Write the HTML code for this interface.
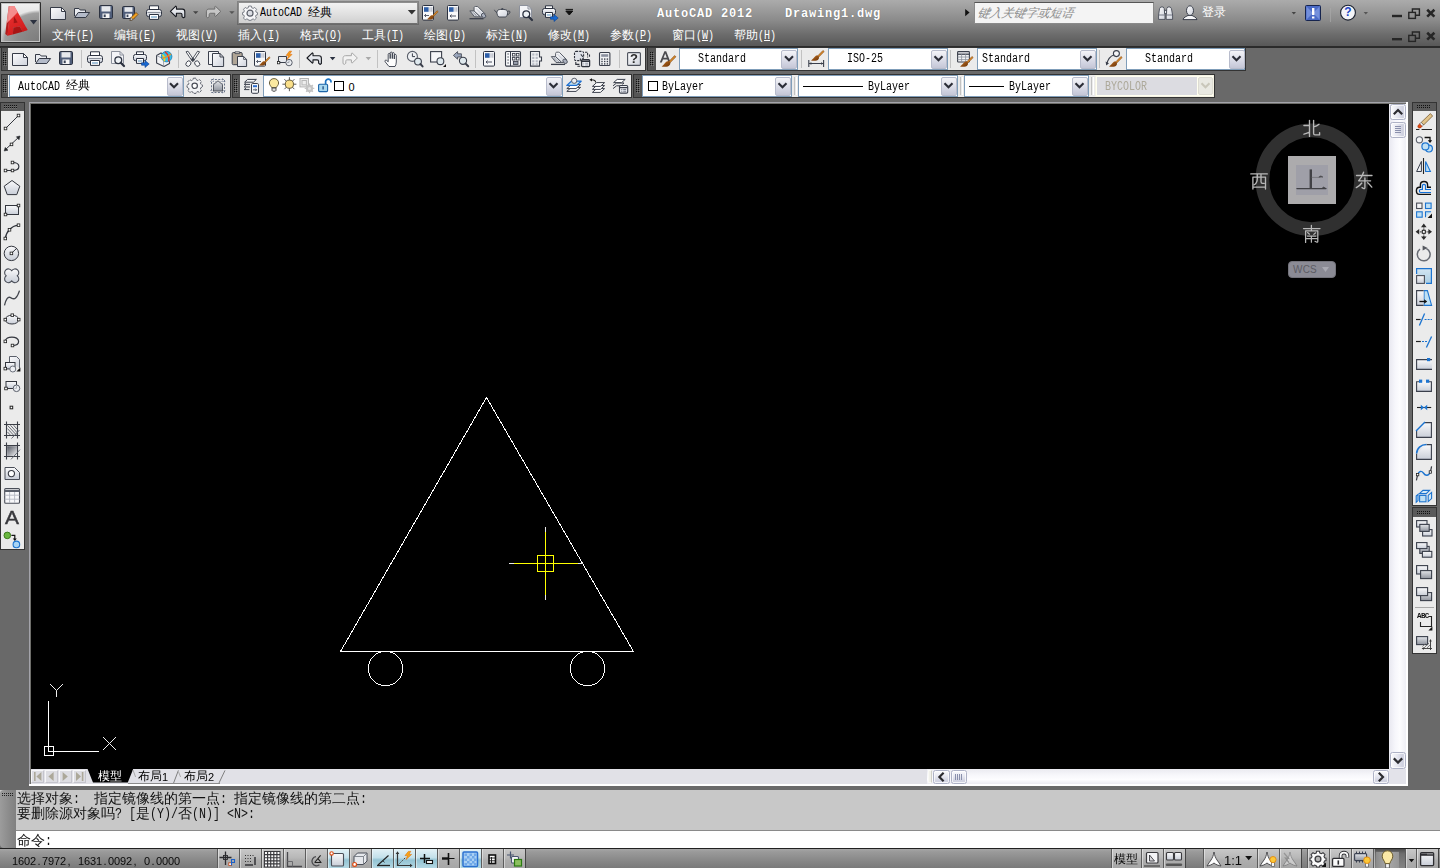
<!DOCTYPE html>
<html lang="zh"><head><meta charset="utf-8"><title>AutoCAD 2012 - Drawing1.dwg</title>
<style>
html,body{margin:0;padding:0}
body{width:1440px;height:868px;overflow:hidden;position:relative;background:#696969;font-family:"Liberation Sans",sans-serif;font-size:12px;line-height:12px;color:#000}
div,span,svg{position:absolute;box-sizing:border-box}
svg.ov{left:0;top:0;width:1440px;height:868px;overflow:visible}
/* latin text imitating 12px bitmap font with 6px advance */
.m{font-family:"Liberation Mono",monospace;font-size:12px;line-height:12px;white-space:pre;transform:scaleX(.8332);transform-origin:0 50%;letter-spacing:0}
.c{font-family:"Liberation Sans",sans-serif;font-size:12px;line-height:12px;white-space:pre}
.dg{font:11px/12px "Liberation Sans",sans-serif;white-space:pre;letter-spacing:-.117px}
.dg i,.dg b{font-style:normal;font-weight:normal;display:inline-block}
.dg b{width:6px;letter-spacing:0;text-align:center}
/* title */
#title{left:0;top:0;width:1440px;height:46px;background:linear-gradient(#ababab 0,#a4a4a4 10%,#8a8a8a 45%,#6c6c6c 75%,#585858 100%)}
#titleln{left:0;top:46px;width:1440px;height:2px;background:#2b2b2b}
.wht{color:#fff}
/* toolbars */
.tb{background:#ebebeb;height:23px}
.grip{background:#555;width:7px;height:23px}
.gap{background:#3c3c3c}
.combo{background:#fff;border:1px solid #7f9db9;height:23px}
.dd{width:16px;height:19px;top:1px;border:1px solid #b8bccc;border-radius:2px;background:linear-gradient(#f4f4f8,#d2d4e2 70%,#c4c6d6)}
.sep{width:1px;background:#c4c4c4}
</style></head><body>
<!-- ===== title + menu background ===== -->
<div id="title"></div><div id="titleln"></div>

<!-- ===== toolbar row 2 ===== -->
<div style="left:1px;top:47px;width:645px;height:24px;background:#333"></div>
<div class="grip" style="left:2px;top:48px;width:6px;height:22px"></div>
<div class="tb" style="left:8px;top:48px;width:637px;height:22px"></div>
<div style="left:647px;top:47px;width:599px;height:24px;background:#333"></div>
<div class="grip" style="left:648px;top:48px;width:8px;height:22px"></div>
<div class="tb" style="left:656px;top:48px;width:589px;height:22px"></div>

<!-- ===== toolbar row 3 ===== -->
<div style="left:1px;top:74px;width:230px;height:24px;background:#333"></div>
<div class="grip" style="left:2px;top:75px;width:6px;height:22px"></div>
<div class="tb" style="left:8px;top:75px;width:222px;height:22px"></div>
<div style="left:232px;top:74px;width:400px;height:24px;background:#333"></div>
<div class="grip" style="left:233px;top:75px;width:7px;height:22px"></div>
<div class="tb" style="left:240px;top:75px;width:391px;height:22px"></div>
<div style="left:633px;top:74px;width:582px;height:24px;background:#333"></div>
<div class="grip" style="left:634px;top:75px;width:8px;height:22px"></div>
<div class="tb" style="left:642px;top:75px;width:572px;height:22px"></div>

<!-- ===== drawing window frame ===== -->
<div style="left:29px;top:102px;width:1379px;height:684px;background:#fff"></div>
<div style="left:29px;top:102px;width:1377px;height:682px;background:#a4a4ab"></div>
<div style="left:30px;top:103px;width:1376px;height:681px;background:#6e6e6a"></div>
<div id="canvas" style="left:31px;top:104px;width:1358px;height:665px;background:#000"></div>
<!-- v scrollbar -->
<div style="left:1389px;top:104px;width:17px;height:665px;background:linear-gradient(90deg,#e8e8f0,#f6f6fb 35%,#fdfdff 65%,#f0f0f6)"></div>
<!-- bottom strip (tabs + h scrollbar) -->
<div style="left:31px;top:769px;width:1375px;height:15px;background:linear-gradient(#eaeaf0,#f7f7fb 40%,#fdfdff 70%,#ecebf2)"></div>
<div style="left:1389px;top:769px;width:17px;height:15px;background:#e3e3ea"></div>

<!-- ===== command window ===== -->
<div style="left:0;top:790px;width:1440px;height:41px;background:#c8c8c8"></div>
<div style="left:0;top:830px;width:1440px;height:1px;background:#8a8a8a"></div>
<div style="left:16px;top:831px;width:1424px;height:17px;background:#fff"></div>
<div style="left:0;top:790px;width:16px;height:58px;background:linear-gradient(90deg,#9c9c9c,#8a8a8a 60%,#808080);border-radius:4px 0 0 4px"></div>

<!-- ===== status bar ===== -->
<div style="left:0;top:848px;width:1440px;height:1px;background:#222"></div>
<div style="left:0;top:849px;width:1440px;height:19px;background:linear-gradient(#a6a6a6,#9a9a9a 15%,#8c8c8c 50%,#7a7a7a)"></div>
<!-- ===== drawing contents ===== -->
<svg class="ov" viewBox="0 0 1440 868" shape-rendering="crispEdges" fill="none" stroke="#fff" stroke-width="1">
  <!-- triangle -->
  <path d="M340.5 651.5 L486.5 397.5 L633.5 651.5 Z"/>
  <!-- wheels -->
  <circle cx="385.5" cy="668.5" r="17.2"/>
  <circle cx="587.5" cy="668.5" r="17.2"/>
  <!-- crosshair -->
  <g stroke="#ffff00">
    <path d="M514 563.5H578M545.5 532V595"/>
    <rect x="537.5" y="555.5" width="16" height="16"/>
  </g>
  <g stroke="#e8e8e8"><path d="M509 563.5H514M578 563.5H583M545.5 527V532M545.5 595V600"/></g>
  <!-- UCS icon -->
  <path d="M48.5 701V752M48 751.5H99"/>
  <rect x="44.5" y="746.5" width="9" height="9"/>
</svg>
<svg class="ov" viewBox="0 0 1440 868" fill="none" stroke="#fff" stroke-width="1">
  <path d="M50 684L56.5 690.5L63 684M56.5 690.5V697" stroke="#f0f0f0"/>
  <path d="M103 737L116 750M116 737L103 750" stroke="#f0f0f0"/>
  <!-- viewcube ring -->
  <circle cx="1311.8" cy="179.8" r="49.4" stroke="#303030" stroke-width="13.8"/>
</svg>
<!-- viewcube -->
<div style="left:1288px;top:156px;width:48px;height:48px;background:#acabad"></div>
<div style="left:1296px;top:165px;width:32px;height:30px;background:#9f9fa8"></div>
<svg class="ov" viewBox="0 0 1440 868" fill="none" stroke-linecap="round" stroke-linejoin="round" role="img" aria-label="ViewCube">
  <g stroke="#414145"><title>上</title><path d="M1310.800 169.400V188.200" stroke-width="2.400" stroke-linecap="butt"/><path d="M1296.900 188.600H1326" stroke-width="1.300"/><path d="M1312 177.400H1320" stroke-width=".7" stroke="#6a6a70"/><path d="M1319.200 176.800L1320.800 175.900L1322.600 176.900ZM1322.400 188L1323.600 187L1325.200 188Z" fill="#414145" stroke-width=".6"/></g>
  <g stroke="#b8b8b8" stroke-width="1.350">
    <g><title>北</title><path d="M1309.500 120.300V136.400M1303.900 125.500H1309.500M1304 134.200C1306 133.600 1308 132.800 1309.500 132.200M1313.600 120.300V133.600C1313.600 134.600 1314 134.900 1315 134.900H1319.600V132.600M1319 124.200C1317.400 125.600 1315.400 126.400 1313.600 126.900"/></g>
    <g><title>西</title><path d="M1250.800 173.900H1267.300M1252.900 177.100H1265.500V189M1252.900 177.100V189M1252.900 187.100H1265.500M1257.300 173.900V178.500C1257.300 181.500 1256.300 183.500 1254.300 184.800M1261 173.900V181.800C1261 183 1261.400 183.300 1262.400 183.300H1264.200"/></g>
    <g><title>东</title><path d="M1356.500 175.500H1372M1363.600 172.200C1362.600 175 1360.800 178.400 1358.700 180.800H1370.600M1364.900 178V187.600C1364.900 188.600 1364.200 188.800 1363.400 188.400L1362 187.600M1361.800 183C1360.400 185 1358.400 186.600 1356.300 187.600M1367.700 182.700C1369.200 184 1370.600 185.500 1371.800 187.100"/></g>
    <g><title>南</title><path d="M1303.500 228.500H1320M1311.400 225.300V230.800M1305.600 242.400V230.800H1317.800V241.200C1317.800 242.200 1317.200 242.400 1316.400 242L1315 241.300M1307.600 232.600L1309.500 234.200M1315.600 232.800L1313.800 234.400M1307.400 236H1316M1306.600 238.600H1316.800M1311.400 236V242.200" stroke-width="1.250"/></g>
  </g>
</svg>
<div style="left:1288px;top:261px;width:48px;height:17px;border-radius:4px;background:#8b8b95;border:1px solid #74747c"></div>
<span style="left:1293px;top:264px;font:10px/11px 'Liberation Sans',sans-serif;color:#5c5c64;letter-spacing:.2px">WCS</span>
<svg style="left:1321px;top:266px;width:9px;height:7px" viewBox="0 0 9 7"><path d="M1 1H8L4.5 6Z" fill="#a9a9b2"/></svg>
<!-- ===== shared icon library (16x16 boxes) ===== -->
<svg style="left:0;top:0;width:0;height:0;overflow:hidden" aria-hidden="true">
<defs>
  <linearGradient id="gp" x1="0" y1="0" x2="1" y2="1"><stop offset="0" stop-color="#fcfcfd"/><stop offset="1" stop-color="#cfd3dc"/></linearGradient>
  <linearGradient id="gv" x1="0" y1="0" x2="0" y2="1"><stop offset="0" stop-color="#fafafb"/><stop offset="1" stop-color="#c9ced8"/></linearGradient>
  <linearGradient id="gb" x1="0" y1="0" x2="0" y2="1"><stop offset="0" stop-color="#d4e6f2"/><stop offset="1" stop-color="#a9cde3"/></linearGradient>
  <linearGradient id="gg" x1="0" y1="0" x2="0" y2="1"><stop offset="0" stop-color="#e4e6ea"/><stop offset="1" stop-color="#8f949e"/></linearGradient>
  <linearGradient id="gbr" x1="0" y1="0" x2="1" y2="1"><stop offset="0" stop-color="#b86a1e"/><stop offset="1" stop-color="#6e360a"/></linearGradient>
  <g id="brush"><path d="M0 0C1.800 -.800 3 -3.400 5 -4.800C6.200 -5.600 8 -5.200 8.600 -3.800C9.200 -2.200 8 -.600 6.200 0C4.200 .600 1.800 .600 0 0Z" fill="url(#gbr)"/><path d="M7.400 -5L13 -10.800L14.300 -9.600L8.600 -3.800Z" fill="#d88a26" stroke="#7a3e0e" stroke-width=".6"/></g>
  <g id="i-new"><path d="M.5 2.5H11.5L15.5 6.5V14.5H.5Z" fill="url(#gp)" stroke="#353a46"/><path d="M11.5 2.5V6.5H15.5Z" fill="#fff" stroke="#353a46" stroke-linejoin="round"/></g>
  <g id="i-open"><path d="M.5 11V3.5H5L6.2 5H11.5V7.5" fill="#e9ebf0" stroke="#353a46" stroke-linejoin="round"/><path d="M.7 12.5L4.2 7.5H15.6L11.8 12.5Z" fill="#b4bbc9" stroke="#353a46" stroke-linejoin="round"/></g>
  <g id="i-save"><rect x="1.5" y=".5" width="13" height="13" rx="1.2" fill="#505e7a" stroke="#2c3240"/><rect x="3.5" y="1.2" width="9" height="5.3" fill="#e6e8ec"/><rect x="4.5" y="8.5" width="7" height="4.5" fill="#f6f6f7"/><rect x="5.7" y="9.5" width="2" height="2.6" fill="#3a4458"/></g>
  <g id="i-saveas"><rect x=".5" y="1.5" width="12" height="12" rx="1.2" fill="#505e7a" stroke="#2c3240"/><rect x="2.5" y="2.2" width="8" height="4.6" fill="#e6e8ec"/><rect x="3.5" y="8.7" width="6.5" height="4.2" fill="#f6f6f7"/><rect x="4.6" y="9.6" width="1.8" height="2.4" fill="#3a4458"/><path d="M8 15.5L9 12.5L14 7.5L16 9.5L11 14.5Z" fill="#f0a020" stroke="#6a3c08" stroke-width=".7"/><path d="M8 15.5L9 12.5L11 14.5Z" fill="#fff" stroke="#333" stroke-width=".6"/></g>
  <g id="i-print"><path d="M3.5 5V.8H12.5V5" fill="#fff" stroke="#2c3240"/><rect x=".5" y="4.5" width="15" height="7.2" rx="2.2" fill="url(#gv)" stroke="#2c3240"/><path d="M1.5 7.5H14.5" stroke="#8a909c"/><path d="M3.5 9.5H12.5V14.4H3.5Z" fill="#fff" stroke="#2c3240"/><path d="M5 12H11" stroke="#8fb4d2" stroke-width="1.6"/></g>
  <g id="i-preview"><path d="M1.5 .5H10L13.5 4V12.5H1.5Z" fill="#f3f4f7" stroke="#8c919c"/><path d="M10 .5V4H13.5" fill="none" stroke="#8c919c"/><circle cx="8.3" cy="9.2" r="3.4" fill="#eef2f5" stroke="#2c3240" stroke-width="1.3"/><path d="M10.8 11.7L14 15" stroke="#2c3240" stroke-width="2.2" stroke-linecap="round"/></g>
  <g id="i-publish"><path d="M3.5 4V.8H10.5V4" fill="#fff" stroke="#2c3240"/><rect x=".5" y="3.5" width="13" height="6.2" rx="2" fill="url(#gv)" stroke="#2c3240"/><path d="M3.5 7.5H10.5V12.4H3.5Z" fill="#fff" stroke="#2c3240"/><path d="M4.8 10H9.4" stroke="#8fb4d2" stroke-width="1.5"/><path d="M8.5 11.8H12V9.5L16.2 13L12 16.5V14.2H8.5Z" fill="#1769d2" stroke="#0b3f8e" stroke-width=".6"/></g>
  <g id="i-match"><rect x=".5" y=".5" width="11" height="14.6" rx="1" fill="#f7f8fa" stroke="#2c3240"/><rect x="2" y="2.2" width="4.6" height="4.6" fill="#2e5fa8"/><path d="M8 2.2V6.8M9.8 2.2V6.8" stroke="#b8bdc8" stroke-width="1.2"/><path d="M2.5 10.5H7M2.5 10.5L4 9M2.5 10.5L4 12" stroke="#4a5060" fill="none" stroke-width=".9"/><use href="#brush" transform="translate(5 14.200) scale(.78)"/></g>
  <g id="i-props"><rect x="2.5" y=".5" width="11" height="14.6" rx="1" fill="#f7f8fa" stroke="#2c3240"/><rect x="4" y="2.2" width="4.6" height="4.6" fill="#2e5fa8"/><path d="M10 2.2V6.8M11.8 2.2V6.8" stroke="#b8bdc8" stroke-width="1.2"/><path d="M5 11H11M5 11L6.6 9.6M5 11L6.6 12.4" stroke="#4a5060" fill="none" stroke-width="1"/></g>
  <g id="i-sheet"><path d="M.3 6.600H4.600L10.800 12.500H5Z" fill="#dfe2e8" stroke="#4a4f5a" stroke-width=".9" stroke-linejoin="round"/><path d="M1.800 7.600L6.600 12.200M3.300 7.600L8.100 12.200" stroke="#5a5f6a" stroke-width=".7" stroke-dasharray="1 .7"/><path d="M4.600 6.600V3.400C4.600 2.500 5.200 2.200 6 2.200H7.600C8.200 2.200 8.600 2.500 9 3L15.600 9.600L12.400 12.500H10.800Z" fill="url(#gp)" stroke="#4a4f5a" stroke-width=".9" stroke-linejoin="round"/><path d="M6.400 4L12 9.800" stroke="#b8bcc6" stroke-width=".7"/><ellipse cx="14.100" cy="11.300" rx="1.900" ry="2.500" transform="rotate(-40 14.100 11.300)" fill="#aab0be" stroke="#4a4f5a" stroke-width=".9"/><path d="M0 14.400H14" stroke="#3a3f4b" stroke-width="1.300"/></g>
  <path id="arw" d="M.400 6.400L5.800 1.200L6.400 1.800V4.100H12.400C14 4.100 14.800 5.200 14.800 6.800V12L13.400 12.800L12 11.600V9.600C12 8.600 11.400 8.250 10.600 8.250H6.400V11L5.800 11.600Z" stroke-linejoin="round"/>
  <g id="i-undo"><use href="#arw" fill="url(#gv)" stroke="#16181e" stroke-width="1.100"/></g>
  <g id="i-redo"><use href="#arw" transform="translate(15.200 0) scale(-1 1)" fill="#c6c6c6" stroke="#6c6c6c" stroke-width="1"/></g>
  <g id="i-redo2"><use href="#arw" transform="translate(15.200 0) scale(-1 1)" fill="#f2f2f2" stroke="#a6a6a6" stroke-width="1"/></g>
</defs>
</svg>
<!-- ===== application button ===== -->
<div style="left:0;top:2px;width:41px;height:41px;background:#2e2e2e;border-radius:1px"></div>
<div style="left:1px;top:3px;width:39px;height:39px;border:1px solid #c2c2c2;background:radial-gradient(ellipse 38px 31px at 100% 100%,#7c7c7c 0,#8b8b8b 55%,#9f9f9f 90%,rgba(170,170,170,0) 100%),linear-gradient(#f0f0f0,#dcdcdc 50%,#c4c4c4)"></div>
<svg class="ov" viewBox="0 0 1440 868">
  <defs>
    <linearGradient id="ga1" x1="0" y1="0" x2="0.4" y2="1"><stop offset="0" stop-color="#ee4a4a"/><stop offset=".4" stop-color="#e42c2c"/><stop offset="1" stop-color="#d01c1c"/></linearGradient>
  </defs>
  <!-- red A -->
  <path d="M8.700 6.200L10.600 6.200L7.600 35.800L5.300 34Z" fill="#b41c1c"/>
  <path d="M10.400 6.200L14.300 6L27.600 30L22.600 31.800L19.800 26.600L13.400 27.600L12.800 34.600L7.400 35.800Z" fill="url(#ga1)"/>
  <path d="M8.700 6.200L14.300 6L17.700 12.200L6.600 23.400Z" fill="#f9a4a4" opacity=".8"/>
  <path d="M14 16.400L17.700 22.600L13.700 23.200Z" fill="#a21616"/>
  <path d="M13.400 27.600L19.800 26.600L22.600 31.800L12.800 34.600Z" fill="#a81414"/>
  <path d="M22.600 31.800L27.600 30L26 27.200L21.400 29.400Z" fill="#c41c1c" opacity=".6"/>
  <path d="M30 20H37.2L33.6 24.6Z" fill="#2b3140"/>
  <!-- quick access toolbar -->
  <use href="#i-new" x="50" y="5"/><use href="#i-open" x="74" y="5"/><use href="#i-save" x="98" y="5"/>
  <use href="#i-saveas" x="122" y="5"/><use href="#i-print" x="146" y="5"/>
  <use href="#i-undo" x="170" y="5"/><path d="M193 11.3H198.4L195.7 14Z" fill="#444"/>
  <use href="#i-redo" x="206" y="5"/><path d="M229.2 11.3H234.6L231.9 14Z" fill="#555"/>
  <use href="#i-match" x="422" y="5"/><use href="#i-props" x="445" y="5"/><use href="#i-sheet" x="469.500" y="4.300"/>
  <!-- teapot -->
  <g stroke="#3a3f4b" stroke-width=".9"><path d="M497.5 10.5C498.5 9 506 9 507 10.5C508.4 12.6 507.4 15.6 505.8 17H498.8C497.2 15.6 496.2 12.6 497.5 10.5Z" fill="url(#gp)"/><path d="M497 12.5C495.6 12.2 495 11 494.4 9.8" fill="none"/><path d="M507.6 11.4C509.6 10.4 510.6 11.6 509.6 13.2C509 14.2 508 14.6 507.2 14.6" fill="none"/><path d="M501 9.2H503.6M502.3 9.2V8" /></g>
  <use href="#i-preview" x="518" y="5"/><use href="#i-publish" x="542" y="5"/>
  <path d="M565.6 9.4H573M565.8 11H572.8L569.3 15Z" fill="#111" stroke="#111" stroke-width="1"/>
  <!-- search arrow -->
  <path d="M965.2 9L969.6 12.6L965.2 16.2Z" fill="#111"/>
  <!-- binoculars -->
  <g stroke="#3a3f4b" stroke-width=".8"><path d="M1159.6 8.5L1160.8 7H1163.2L1164.2 8.5L1165 15V19.4H1158.6V15Z" fill="url(#gp)"/><path d="M1166.8 8.5L1167.8 7H1170.2L1171.4 8.5L1172.6 15V19.4H1166.2V15Z" fill="url(#gp)"/><path d="M1164.4 10.4H1166.6V13.6H1164.6Z" fill="#e8eaee"/><path d="M1158.8 15H1164.8M1166.2 15H1172.4" stroke="#5a6070"/></g>
  <!-- user -->
  <g stroke="#2c3240" stroke-width=".9"><path d="M1183 19.6C1183.6 17 1186.6 16.6 1188 15.4H1192C1193.4 16.6 1196.4 17 1197 19.6Z" fill="#f4f5f7"/><ellipse cx="1190" cy="10.6" rx="3.5" ry="4.8" fill="url(#gp)"/></g>
  <path d="M1291.6 12H1296L1293.8 14.6Z" fill="#444"/>
  <!-- info -->
  <rect x="1305.5" y="5.5" width="15" height="15" rx="1" fill="#4a6ac6" stroke="#16244e"/>
  <path d="M1306.5 6.5L1313 13L1306.5 19.5ZM1319.5 6.5L1313 13L1319.5 19.5Z" fill="#7d98e0" opacity=".8"/>
  <path d="M1312 8H1314.4V15H1312ZM1312 16.4H1314.4V18.6H1312Z" fill="#fff"/>
  <path d="M1330.5 8V22" stroke="#a9a9a9" stroke-width="1" opacity=".7"/>
  <!-- help -->
  <circle cx="1348" cy="12.7" r="7.4" fill="#f3f4f8" stroke="#1c2230" stroke-width="1.1"/>
  <path d="M1363.6 12H1368L1365.8 14.6Z" fill="#555"/>
  <!-- window controls -->
  <g fill="none" stroke="#262626">
    <path d="M1392 16H1402" stroke-width="2.4"/><path d="M1392 39.2H1402" stroke-width="2.4"/>
    <g stroke-width="1.4"><path d="M1412.4 12V9H1419.4V15.2H1416"/><rect x="1408.8" y="12.4" width="6.6" height="6"/>
    <path d="M1412.4 35V32H1419.4V38.2H1416"/><rect x="1408.8" y="35.4" width="6.6" height="6"/></g>
    <g stroke-width="2.6"><path d="M1427.2 9.8L1434.4 16.6M1434.4 9.8L1427.2 16.6"/><path d="M1427.2 32.8L1434.4 39.6M1434.4 32.8L1427.2 39.6"/></g>
  </g>
</svg>
<span style="left:1343px;top:6px;width:10px;font:bold 12px/13px 'Liberation Sans',sans-serif;color:#1c46c4;text-align:center">?</span>

<!-- workspace combo in title -->
<div style="left:238px;top:2px;width:180px;height:22px;border:1px solid #8e8e8e;border-bottom-color:#707070;background:linear-gradient(#f2f2f2,#e2e2e2 50%,#d0d0d0);box-shadow:0 0 0 1px rgba(60,60,60,.35)"></div>
<svg style="left:242px;top:5px;width:16px;height:16px" viewBox="0 0 16 16"><path d="M6.6 .8H9.4L9.8 2.6L11.4 3.3L13 2.3L15 4.3L14 5.9L14.6 7.4L16 7.8V10L14.5 10.4L13.9 12L14.9 13.6L12.9 15.5L11.4 14.5L9.8 15.1L9.4 16H6.6L6.2 15.1L4.6 14.5L3 15.5L1.1 13.6L2 12L1.5 10.4L0 10V7.8L1.5 7.4L2 5.9L1.1 4.3L3 2.3L4.6 3.3L6.2 2.6Z" fill="#f6f6f8" stroke="#6a6e78" stroke-width=".9" transform="scale(.94) translate(.5 .3)"/><circle cx="8" cy="8.2" r="3" fill="#dcdee4" stroke="#5a5e68" stroke-width="1.2"/></svg>
<span class="m" style="left:260px;top:7px">AutoCAD </span><span class="c" style="left:308px;top:6px">经典</span>
<svg style="left:407px;top:9px;width:10px;height:7px" viewBox="0 0 10 7"><path d="M.8 1H8.8L4.8 5.6Z" fill="#333"/></svg>

<!-- title text -->
<span id="ttl" style="left:657px;top:8px;font:bold 12px/12px 'Liberation Mono',monospace;letter-spacing:.8px;color:#fff;white-space:pre;text-shadow:0 0 1px rgba(0,0,0,.35)">AutoCAD 2012    Drawing1.dwg</span>

<!-- search box -->
<div style="left:974px;top:2px;width:180px;height:22px;border:1px solid #8a8a8a;border-top-color:#555;background:#f4f4f4"></div>
<span class="c" style="left:978px;top:7px;color:#8c8c8c;font-style:italic;letter-spacing:0;transform:skewX(-12deg)">键入关键字或短语</span>
<span class="c wht" style="left:1202px;top:6px">登录</span>
<!-- ===== menu bar ===== -->
<span class="c wht" style="left:52px;top:29px">文件</span><span class="m wht" style="left:76px;top:30px">(<u>F</u>)</span>
<span class="c wht" style="left:114px;top:29px">编辑</span><span class="m wht" style="left:138px;top:30px">(<u>E</u>)</span>
<span class="c wht" style="left:176px;top:29px">视图</span><span class="m wht" style="left:200px;top:30px">(<u>V</u>)</span>
<span class="c wht" style="left:238px;top:29px">插入</span><span class="m wht" style="left:262px;top:30px">(<u>I</u>)</span>
<span class="c wht" style="left:300px;top:29px">格式</span><span class="m wht" style="left:324px;top:30px">(<u>O</u>)</span>
<span class="c wht" style="left:362px;top:29px">工具</span><span class="m wht" style="left:386px;top:30px">(<u>T</u>)</span>
<span class="c wht" style="left:424px;top:29px">绘图</span><span class="m wht" style="left:448px;top:30px">(<u>D</u>)</span>
<span class="c wht" style="left:486px;top:29px">标注</span><span class="m wht" style="left:510px;top:30px">(<u>N</u>)</span>
<span class="c wht" style="left:548px;top:29px">修改</span><span class="m wht" style="left:572px;top:30px">(<u>M</u>)</span>
<span class="c wht" style="left:610px;top:29px">参数</span><span class="m wht" style="left:634px;top:30px">(<u>P</u>)</span>
<span class="c wht" style="left:672px;top:29px">窗口</span><span class="m wht" style="left:696px;top:30px">(<u>W</u>)</span>
<span class="c wht" style="left:734px;top:29px">帮助</span><span class="m wht" style="left:758px;top:30px">(<u>H</u>)</span>
<!-- ===== toolbar row 2 : standard toolbar ===== -->
<svg class="ov" viewBox="0 0 1440 868">
  <!-- grips -->
  <defs><path id="gripdots" d="M0 0h1v1h-1zM2 0h1v1h-1zM0 2h1v1h-1zM2 2h1v1h-1zM0 4h1v1h-1zM2 4h1v1h-1zM0 6h1v1h-1zM2 6h1v1h-1zM0 8h1v1h-1zM2 8h1v1h-1zM0 10h1v1h-1zM2 10h1v1h-1zM0 12h1v1h-1zM2 12h1v1h-1z"/></defs>
  <g fill="#9a9a9a" opacity=".55"><use href="#gripdots" x="4" y="53"/><use href="#gripdots" x="651" y="53"/><use href="#gripdots" x="4" y="80"/><use href="#gripdots" x="235" y="80"/><use href="#gripdots" x="637" y="80"/></g>
  <g fill="#111"><use href="#gripdots" x="3" y="52"/><use href="#gripdots" x="650" y="52"/><use href="#gripdots" x="3" y="79"/><use href="#gripdots" x="234" y="79"/><use href="#gripdots" x="636" y="79"/></g>
  <g stroke="#c2c2c2"><path d="M81.5 50V68M178.5 50V68M299.5 50V68M377.5 50V68M475.5 50V68M619.5 50V68"/></g>
  <use href="#i-new" x="12" y="51"/><use href="#i-open" x="35" y="51"/><use href="#i-save" x="58" y="51"/>
  <use href="#i-print" x="87" y="51"/><use href="#i-preview" x="110" y="51"/><use href="#i-publish" x="133" y="51"/>
  <!-- 3D DWF -->
  <g transform="translate(156 51)"><path d="M.6 4.5L5 2L8 3.5V6L13.5 9V12.5L8 15.5L.6 12Z" fill="#f2f3f5" stroke="#3a3f4b" stroke-width="1.1" stroke-linejoin="round"/><path d="M.6 4.5L7.6 8L7.6 15.5M7.6 8L13.5 9" fill="none" stroke="#8a8f9a" stroke-width=".8"/><circle cx="10.6" cy="5.6" r="5.3" fill="#35c0e8" stroke="#1a78b8" stroke-width=".8"/><path d="M6.4 3.6C8.6 5.6 9 8 8.2 10.2" fill="none" stroke="#f0d020" stroke-width="1.6"/><path d="M9 .8C12 3 13.6 6.4 12.6 10.4" fill="none" stroke="#e83020" stroke-width="1.5"/><path d="M6 7.4C9 7 12.4 5 15 3" fill="none" stroke="#f09020" stroke-width="1.3"/></g>
  <!-- cut -->
  <g transform="translate(185 51)" stroke="#3a3f4b" stroke-width=".9" fill="#fafafa"><path d="M1 .8L3 .2L9 9.2L7.4 10.4Z"/><path d="M14.6 .8L12.6 .2L6.6 9.2L8.2 10.4Z"/><ellipse cx="3.4" cy="12.6" rx="2.3" ry="2.9" transform="rotate(35 3.4 12.6)"/><ellipse cx="12.2" cy="12.6" rx="2.3" ry="2.9" transform="rotate(-35 12.2 12.6)"/><circle cx="7.8" cy="8.4" r="1.2" fill="#3a3f4b"/></g>
  <!-- copy -->
  <g transform="translate(208 51)" stroke="#3a3f4b"><path d="M.5 .5H10.5V13.5H.5Z" fill="#f4f5f7"/><path d="M4.5 2.5H12L15.6 6V15.5H4.5Z" fill="url(#gp)"/><path d="M12 2.5V6H15.6" fill="none"/></g>
  <!-- paste -->
  <g transform="translate(231 51)" stroke="#3a3f4b"><rect x="1.2" y="1.5" width="10" height="12.2" rx="1.2" fill="#b0a596"/><path d="M4 2.6V.8H8.6V2.6Z" fill="#ddd8d0" stroke-width=".8"/><path d="M6.5 5.5H12.6L15.6 8.4V15.5H6.5Z" fill="url(#gp)"/><path d="M12.6 5.5V8.4H15.6" fill="none" stroke-width=".8"/></g>
  <use href="#i-match" x="254" y="51"/>
  <!-- block editor -->
  <g transform="translate(277 51)"><path d="M1.5 5.5H9.5V11.5H1.5Z" fill="#e8eaee" stroke="#3a3f4b"/><rect x=".4" y="10.4" width="2.4" height="2.4" fill="#fff" stroke="#222" stroke-width=".8"/><circle cx="12" cy="11.6" r="3.2" fill="#eceef2" stroke="#5a5f6a"/><path d="M12 11.6V9.6M12 11.6H10" stroke="#8a8f9a" stroke-width=".8"/><path d="M12.4 .2L9.2 4.4H11.6L10 8.4L15 3.4H12.4L14.6 .2Z" fill="#f8a018" stroke="#e06a08" stroke-width=".6"/></g>
  <use href="#i-undo" x="306.6" y="51.6"/><path d="M329.8 57H335.4L332.6 60.2Z" fill="#2b3140"/>
  <use href="#i-redo2" x="342.600" y="51.600"/>
  <path d="M365.6 57H371.2L368.4 60.2Z" fill="#a9a9a9"/>
  <!-- pan (hand) -->
  <g transform="translate(384 51)" fill="#fefefe" stroke="#2c3240" stroke-width=".85" stroke-linejoin="round"><path d="M5 15.500L1.200 10.800C.300 9.700 1.700 8.500 2.700 9.400L4.200 10.800V3.400C4.200 2 6.200 2 6.200 3.400V7.600V2.200C6.200 .700 8.300 .700 8.300 2.200V7.600V2.600C8.300 1.200 10.300 1.200 10.300 2.600V8V4.400C10.300 3.100 12.300 3.100 12.300 4.400V11C12.300 13 11.700 14.400 11 15.500Z"/></g>
  <!-- zoom realtime -->
  <g transform="translate(406 51)"><circle cx="6.4" cy="5.4" r="5" fill="#eef0f3" stroke="#5a5f6a" stroke-width="1.1"/><path d="M6.4 2.4V5.6H9" fill="none" stroke="#3a3f4b"/><circle cx="12" cy="10.6" r="3.4" fill="#dfe9ee" stroke="#3a3f4b" stroke-width="1.1"/><path d="M14.4 13L16.6 15.4" stroke="#3a3f4b" stroke-width="2" stroke-linecap="round"/></g>
  <!-- zoom window -->
  <g transform="translate(430 51)"><rect x=".6" y=".6" width="11" height="10.4" fill="#f6f6f8" stroke="#3a3f4b" stroke-width="1.1"/><circle cx="10.4" cy="10.2" r="3.4" fill="#dfe9ee" stroke="#3a3f4b" stroke-width="1.1"/><path d="M13 16H16V13Z" fill="#111"/></g>
  <!-- zoom previous -->
  <g transform="translate(453 51)"><path d="M.4 4.4L4.6 .6V2.8H8.4V6H4.6V8.2Z" fill="#9aa6bc" stroke="#3a3f4b" stroke-width=".8" stroke-linejoin="round"/><circle cx="10" cy="9.8" r="3.6" fill="#dfe9ee" stroke="#3a3f4b" stroke-width="1.1"/><path d="M12.6 12.6L15.2 15.2" stroke="#3a3f4b" stroke-width="2" stroke-linecap="round"/></g>
  <use href="#i-props" x="481" y="51"/>
  <!-- design center -->
  <g transform="translate(505 51)"><rect x=".5" y=".5" width="15" height="14.6" rx="1" fill="#f7f8fa" stroke="#3a3f4b" stroke-width="1.1"/><path d="M5.5 .5V15" stroke="#3a3f4b"/><path d="M2.4 3h1.4M2.4 6h1.4M2.4 9h1.4M2.4 12h1.4" stroke="#3a3f4b" stroke-width="1.2"/><g fill="#fff" stroke="#3a3f4b" stroke-width=".9"><rect x="7.4" y="2.4" width="2.6" height="2.6"/><rect x="11.4" y="2.4" width="2.6" height="2.6"/><rect x="7.4" y="6.4" width="2.6" height="2.6"/><rect x="11.4" y="6.4" width="2.6" height="2.6"/><rect x="8.4" y="10.4" width="4.6" height="3" fill="#9aa0ae"/></g></g>
  <!-- tool palettes -->
  <g transform="translate(528 51)"><path d="M2.5 .5H11.5V6H13.5V10H11.5V15.1H2.5Z" fill="#f2f3f5" stroke="#3a3f4b" stroke-width="1.1"/><g fill="#b8bcc6"><rect x="4.2" y="2.4" width="2.2" height="2.2"/><rect x="7.6" y="2.4" width="2.2" height="2.2"/><rect x="4.2" y="5.8" width="2.2" height="2.2"/><rect x="7.6" y="5.8" width="2.2" height="2.2"/><rect x="4.2" y="9.2" width="2.2" height="2.2"/><rect x="7.6" y="9.2" width="2.2" height="2.2"/><rect x="4.2" y="12.2" width="2.2" height="1.8"/><rect x="7.6" y="12.2" width="2.2" height="1.8"/></g></g>
  <use href="#i-sheet" x="551" y="50"/>
  <!-- markup set manager -->
  <g transform="translate(574 51)"><path d="M2 .400H8Q9.600 .400 9.600 2V6.500Q9.600 8 8 8H6.400V9.600H2Q.500 9.600 .500 8V2Q.500 .400 2 .400Z" fill="#dfe2e8" stroke="#2e323c" stroke-width="1.100" stroke-dasharray="2.200 1"/><path d="M6.800 3.400L9 6" stroke="#2e323c" stroke-width="1.100"/><path d="M11 1.200H13.600V6.600M15.500 3.400V6.600" fill="none" stroke="#2e323c" stroke-width="1.100" stroke-dasharray="2.400 1"/><path d="M1.800 11V13.400H5.400M3.400 15.300H6.200" fill="none" stroke="#2e323c" stroke-width="1.100"/><rect x="7.600" y="8.600" width="8" height="7" rx="1" fill="#f8f9fb" stroke="#2e323c" stroke-width="1.300"/><path d="M7.600 10.200H15.600" stroke="#2e323c" stroke-width="1.600"/><path d="M9.300 12.200h1M11.200 12.200h3M9.300 14h1M11.200 14h3" stroke="#8a90a0" stroke-width="1"/></g>
  <!-- quickcalc -->
  <g transform="translate(597 51)"><rect x="2.5" y="1.5" width="10.4" height="13" rx="1" fill="#f2f3f5" stroke="#3a3f4b" stroke-width="1.1"/><rect x="4.2" y="3.2" width="7" height="2.6" fill="#8a909e"/><g fill="#3a3f4b"><rect x="4.3" y="7.4" width="1.4" height="1.4"/><rect x="7" y="7.4" width="1.4" height="1.4"/><rect x="9.7" y="7.4" width="1.4" height="1.4"/><rect x="4.3" y="9.8" width="1.4" height="1.4"/><rect x="7" y="9.8" width="1.4" height="1.4"/><rect x="9.7" y="9.8" width="1.4" height="1.4"/><rect x="4.3" y="12.2" width="1.4" height="1.4"/><rect x="7" y="12.2" width="1.4" height="1.4"/><rect x="9.7" y="12.2" width="1.4" height="1.4"/></g></g>
  <!-- help -->
  <rect x="627.6" y="52.6" width="12.8" height="12.8" rx="1" fill="url(#gp)" stroke="#4a4f5a" stroke-width="1.1"/>
</svg>
<span style="left:628px;top:52px;width:12px;font:bold 13px/14px 'Liberation Sans',sans-serif;color:#2a2a2a;text-align:center">?</span>
<!-- ===== toolbar row 2 : styles toolbar ===== -->
<div class="combo" style="left:679px;top:48px;width:119px;height:22px"><div class="dd" style="left:101px"></div></div>
<div class="combo" style="left:828px;top:48px;width:120px;height:22px"><div class="dd" style="left:101.5px"></div></div>
<div class="combo" style="left:977px;top:48px;width:120px;height:22px"><div class="dd" style="left:101.5px"></div></div>
<div class="combo" style="left:1126px;top:48px;width:119px;height:22px"><div class="dd" style="left:101.5px"></div></div>
<span class="m" style="left:697.5px;top:52.5px">Standard</span>
<span class="m" style="left:846.5px;top:52.5px">ISO-25</span>
<span class="m" style="left:982px;top:52.5px">Standard</span>
<span class="m" style="left:1144.5px;top:52.5px">Standard</span>
<svg class="ov" viewBox="0 0 1440 868">
  <g stroke="#c2c2c2"><path d="M801.5 50V68M950.5 50V68M1099.5 50V68"/></g>
  <g id="chev" fill="none" stroke="#2a2c36" stroke-width="2.1"><path d="M785 56.2L789 60.2L793 56.2"/></g>
  <use href="#chev" x="149.5"/><use href="#chev" x="298.5"/><use href="#chev" x="447.5"/>
  <!-- text style : A + brush -->
  <g transform="translate(659 50)"><path d="M.8 12.6L5.4 1.2H7.2L11.6 12.6H9.6L8.4 9.4H4L2.8 12.6ZM4.6 7.8H7.8L6.2 3.4Z" fill="#4a4a4e"/><use href="#brush" transform="translate(2.6 16.4) scale(1.0)"/></g>
  <!-- dim style -->
  <g transform="translate(808 50)"><path d="M.8 10V17M15.6 10V17M.8 13.5H15.6" fill="none" stroke="#3a3f4b" stroke-width="1.1"/><path d="M.8 13.5L3.4 12.2V14.8ZM15.6 13.5L13 12.2V14.8Z" fill="#3a3f4b"/><use href="#brush" transform="translate(3 10.4) scale(0.92)"/></g>
  <!-- table style -->
  <g transform="translate(957 50)"><rect x=".6" y="1.6" width="11.8" height="10.4" rx=".8" fill="#f4f5f7" stroke="#3a3f4b" stroke-width="1.1"/><path d="M.6 4.2H12.4" stroke="#3a3f4b" stroke-width="1.3"/><path d="M.6 7H12.4M.6 9.6H12.4M4.6 4.2V12M8.6 4.2V12" stroke="#8a8f9a" stroke-width=".8"/><use href="#brush" transform="translate(3 16.4) scale(0.92)"/></g>
  <!-- multileader style -->
  <g transform="translate(1105 50)"><circle cx="11.4" cy="3.6" r="3" fill="#f4f5f7" stroke="#3a3f4b" stroke-width="1.1"/><path d="M8.8 5C5 6 3 9 1.6 14.4" fill="none" stroke="#3a3f4b" stroke-width="1.1"/><path d="M1.2 15.6L.6 11.6L4 13.2Z" fill="#3a3f4b"/><use href="#brush" transform="translate(4 16.4) scale(0.92)"/></g>
</svg>
<!-- ===== toolbar row 3 : workspaces / layers / properties ===== -->
<div class="combo" style="left:9px;top:75px;width:175px;height:22px"><div class="dd" style="left:156.5px"></div></div>
<span class="m" style="left:18px;top:80.5px">AutoCAD </span><span class="c" style="left:66px;top:79px">经典</span>
<div class="combo" style="left:263px;top:75px;width:299.5px;height:22px"><div class="dd" style="left:281.5px"></div></div>
<span class="dg" style="left:348.5px;top:80.5px"><i>0</i></span>
<div class="combo" style="left:642px;top:75px;width:150px;height:22px"><div class="dd" style="left:131.5px"></div></div>
<span class="m" style="left:662px;top:80.5px">ByLayer</span>
<div class="combo" style="left:798px;top:75px;width:159.5px;height:22px"><div class="dd" style="left:141.5px"></div></div>
<span class="m" style="left:868px;top:80.5px">ByLayer</span>
<div class="combo" style="left:964px;top:75px;width:124.5px;height:22px"><div class="dd" style="left:106.5px"></div></div>
<span class="m" style="left:1009px;top:80.5px">ByLayer</span>
<div style="left:1095px;top:75px;width:119px;height:22px;background:#fffff0;border:1px solid #f4f2e4"><div style="left:1px;top:1px;width:100px;height:18px;background:#dcdce1"></div><div style="left:102px;top:1px;width:15px;height:18px;background:#e9e9e2;border:1px solid #dddcd2;border-radius:2px"></div></div>
<span class="m" style="left:1105px;top:80.5px;color:#aca899">BYCOLOR</span>
<svg class="ov" viewBox="0 0 1440 868">
  <use href="#chev" x="-615" y="27"/><use href="#chev" x="-235.5" y="27"/><use href="#chev" x="-6.5" y="27"/><use href="#chev" x="159.5" y="27"/><use href="#chev" x="290.5" y="27"/>
  <path d="M1201.5 83.2L1205.5 87.2L1209.5 83.2" fill="none" stroke="#c9c7ba" stroke-width="2.1"/>
  <g stroke="#c2c2c2"><path d="M794.5 77V95M960.5 77V95M1091.5 77V95"/></g><g stroke="#fff"><path d="M796.5 77V95M962.5 77V95M1093.5 77V95"/></g>
  <!-- line samples -->
  <path d="M803 86.5H863M969 86.5H1004" stroke="#000" stroke-width="1" shape-rendering="crispEdges"/>
  <!-- colour swatches -->
  <rect x="648.5" y="81.5" width="9" height="9" fill="#fff" stroke="#000" shape-rendering="crispEdges"/>
  <rect x="334.5" y="81.5" width="9" height="9" fill="#fff" stroke="#000" shape-rendering="crispEdges"/>
  <!-- workspace settings gear -->
  <g transform="translate(187 78)"><path d="M6.6 .2H9.4L9.8 2L11.4 2.7L13 1.7L15 3.7L14 5.3L14.6 6.8L16 7.2V9.6L14.5 10L13.9 11.6L14.9 13.2L12.9 15.1L11.4 14.1L9.8 14.7L9.4 16H6.6L6.2 14.7L4.6 14.1L3 15.1L1.1 13.2L2 11.6L1.5 10L0 9.6V7.2L1.5 6.8L2 5.3L1.1 3.7L3 1.7L4.6 2.7L6.2 2Z" fill="#f2f3f5" stroke="#5a5e68" stroke-width="1" stroke-dasharray="3 .8" transform="scale(.96)"/><circle cx="7.7" cy="7.8" r="2.7" fill="#fff" stroke="#4a4e58" stroke-width="1.2"/></g>
  <!-- my workspace -->
  <g transform="translate(210 78)"><rect x="1.5" y="1.5" width="13" height="13" fill="none" stroke="#6a7488" stroke-dasharray="2 1.4"/><path d="M0 3.5H16M0 12.5H16M3.5 0V16M12.5 0V16" stroke="#8a94a8" stroke-width=".7" stroke-dasharray="1.4 1.2"/><path d="M3.5 13V6.6L8 2.8L12.5 6.6V13Z" fill="url(#gg)" stroke="#4a4e58" stroke-width=".9"/></g>
  <!-- layer properties manager -->
  <g transform="translate(243 78)" fill="none" stroke="#3a3f4b" stroke-width="1"><path d="M4.6 1.4H13.4L10.4 4.2H1.6Z" fill="#f4f5f7"/><path d="M1.2 6.4H7M1.2 9H7M1.2 11.6H6.4"/><path d="M1.2 6.4L3 4.8M1.2 9L3 7.4M1.2 11.6L3 10"/><rect x="8.5" y="5.5" width="7" height="9.8" rx="1.2" fill="#f4f5f7"/><rect x="10" y="7.2" width="4" height="2" fill="#2e6fd0" stroke="none"/><path d="M10 11.8H13.6M12.4 10.6L13.6 11.8L12.4 13" stroke-width=".8"/></g>
  <!-- layer state icons in the layer combo -->
  <g transform="translate(269 78)"><path d="M5 .6C7.8 .6 9.6 2.6 9.6 5C9.6 7 8 8 7.4 9.6H2.6C2 8 .4 7 .4 5C.4 2.6 2.2 .6 5 .6Z" fill="#fbe9a0" stroke="#5a5030" stroke-width=".9"/><path d="M3 10V12.4C3 13.6 7 13.6 7 12.4V10Z" fill="#e4e4e4" stroke="#444" stroke-width=".9"/></g>
  <g transform="translate(289.4 84.2)"><g stroke="#4a4a4a" stroke-width=".9"><path d="M0 -7V7M-7 0H7M-5 -5L5 5M5 -5L-5 5"/></g><circle r="4.1" fill="#fbe08a" stroke="#5a5030" stroke-width=".9"/></g>
  <g transform="translate(299.5 78)"><rect x=".5" y=".5" width="8.4" height="8.4" fill="#eee" stroke="#b2b2b2"/><rect x="2.5" y="2.5" width="4.4" height="4.4" fill="none" stroke="#b8b8b8"/><circle cx="10" cy="10.4" r="3.6" fill="#c4c4c4"/><path d="M10 5.6V15.2M5.2 10.4H14.8M6.6 7L13.4 13.8M13.4 7L6.6 13.8" stroke="#c4c4c4" stroke-width="1.3"/><circle cx="10" cy="10.4" r="1.5" fill="#e4e4e4"/></g>
  <g transform="translate(318 78)"><path d="M7.6 6.4V3.6C7.6 .4 13 .4 13 3.6V4.6" fill="none" stroke="#1c74c4" stroke-width="1.7"/><rect x=".6" y="6.2" width="9" height="7.4" rx="1" fill="#a8d8f0" stroke="#1c64a8" stroke-width="1.1"/><path d="M5.1 8.2V11.6" stroke="#1c4a80" stroke-width="1.3"/></g>
  <!-- make object's layer current -->
  <g transform="translate(566 78)" stroke-linejoin="round"><path d="M.8 13.4L5.4 9.4H14.6L10 13.4Z" fill="#fff" stroke="#3a3f4b"/><path d="M.8 10.6L5.4 6.6H14.6L10 10.6Z" fill="#fff" stroke="#3a3f4b"/><path d="M.8 7.4L5.4 3.2H15.2L10.6 7.4Z" fill="#bfe0f2" stroke="#1c6ed0" stroke-width="1.2"/><circle cx="8.2" cy="2.8" r="2.6" fill="#eceef2" stroke="#5a5f6a"/></g>
  <!-- layer previous -->
  <g transform="translate(589 78)" stroke-linejoin="round"><path d="M3.4 14.4L7.6 10.6H15.6L11.4 14.4Z" fill="#fff" stroke="#3a3f4b"/><path d="M3.4 11.4L7.6 7.6H15.6L11.4 11.4Z" fill="#fff" stroke="#3a3f4b"/><path d="M3.4 8.4L7.6 4.6H15.6L11.4 8.4Z" fill="#fff" stroke="#3a3f4b"/><path d="M6.6 4.4C6.6 2.6 5.6 1.8 2.4 1.8" fill="none" stroke="#222" stroke-width="1.1"/><path d="M.4 1.8L3 .2V3.4Z" fill="#111"/></g>
  <!-- layer states manager -->
  <g transform="translate(612 78)" stroke-linejoin="round"><path d="M1 10.6L4.6 7.8H10M1 7.8L4.6 5H12L10.4 6.4" fill="none" stroke="#3a3f4b"/><path d="M1.6 4.6L5.2 1.4H13.2L9.6 4.6Z" fill="#fff" stroke="#3a3f4b"/><rect x="7.5" y="7.5" width="8.2" height="7.6" rx="1.2" fill="#f0f2f6" stroke="#3a3f4b" stroke-width="1.1"/><path d="M7.5 9.6H15.6" stroke="#3a3f4b" stroke-width="1.2"/><path d="M9.2 11.4h1.2M11.2 11.4h3M9.2 13.2h1.2M11.2 13.2h3" stroke="#6a7080"/></g>
</svg>
<!-- ===== left : Draw toolbar ===== -->
<div style="left:0;top:102px;width:25px;height:448px;background:#343434"></div>
<div style="left:1px;top:103px;width:23px;height:8px;background:#5a5a5a"></div>
<div style="left:1px;top:111px;width:23px;height:438px;background:#ebebeb"></div>
<svg class="ov" viewBox="0 0 1440 868">
  <defs><path id="hgrip" d="M0 0h1v1h-1zM2 0h1v1h-1zM4 0h1v1h-1zM6 0h1v1h-1zM8 0h1v1h-1zM10 0h1v1h-1zM12 0h1v1h-1zM0 2h1v1h-1zM2 2h1v1h-1zM4 2h1v1h-1zM6 2h1v1h-1zM8 2h1v1h-1zM10 2h1v1h-1zM12 2h1v1h-1z"/>
  <rect id="hd" x="-1.300" y="-1.300" width="2.600" height="2.600" fill="#fff" stroke="#1c1c1c" stroke-width=".8"/></defs>
  <use href="#hgrip" x="4" y="105" fill="#111"/><use href="#hgrip" x="4" y="106" fill="#8a8a8a" opacity=".5"/>
  <use href="#hgrip" x="4" y="105" fill="#111"/>
  <g fill="none" stroke="#33363e" stroke-width="1">
    <!-- line -->
    <path d="M5.5 128.5L18.5 115.5"/><use href="#hd" x="5.5" y="128.5"/><use href="#hd" x="18.5" y="115.5"/>
    <!-- construction line -->
    <path d="M5 150L19.5 136.5"/><path d="M4.200 151L5.200 147.400L8 150.200ZM20 136L16.400 136.800L19 139.800Z" fill="#222" stroke-width=".6"/><use href="#hd" x="11.5" y="144.4"/>
    <!-- polyline -->
    <path d="M5.5 170.5H12.5C21 170.5 21 162.5 12.5 162.5" stroke-width="1.2"/><use href="#hd" x="5.5" y="170.5"/><use href="#hd" x="12.5" y="170.5"/><use href="#hd" x="12.5" y="162.5"/>
    <!-- polygon -->
    <path d="M12 180.5L19.8 186.2L16.8 194.6H7.2L4.2 186.2Z" fill="url(#gv)" stroke-linejoin="round"/>
    <!-- rectangle -->
    <rect x="5.5" y="205.5" width="13" height="9" fill="url(#gv)"/><use href="#hd" x="18.5" y="205.5"/><use href="#hd" x="5.5" y="214.5"/>
    <!-- arc -->
    <path d="M5.300 238.500C6 232 11 226 18.500 225.200" stroke-width="1.300"/><use href="#hd" x="5.3" y="238.5"/><use href="#hd" x="9.5" y="229.8"/><use href="#hd" x="18.5" y="225.2"/>
    <!-- circle -->
    <circle cx="11.4" cy="253.4" r="7.2" fill="url(#gv)"/><path d="M11.4 253.4L17 248"/><use href="#hd" x="11.4" y="253.4"/>
    <!-- revision cloud -->
    <path d="M11.700 270.800A3.800 3.800 0 1 1 17.200 275.800A3.800 3.800 0 1 1 11.700 280.800A3.800 3.800 0 1 1 6.200 275.800A3.800 3.800 0 1 1 11.700 270.800Z" fill="url(#gv)" stroke="#4a4e58" stroke-width="1.100" stroke-linejoin="round"/>
    <!-- spline -->
    <path d="M4.5 305.4C6 299 8 296.6 10 297.4C12.4 298.4 13.6 299.8 15.6 298C17.4 296.4 18.6 293.6 19.5 290.6" stroke-width="1.3" stroke="#44474f"/>
    <!-- ellipse -->
    <ellipse cx="12" cy="319.6" rx="6.8" ry="4.4" fill="url(#gv)"/><use href="#hd" x="5.3" y="319.6"/><use href="#hd" x="18.7" y="319.6"/><use href="#hd" x="12.3" y="315.2"/>
    <!-- ellipse arc -->
    <path d="M5.3 341.4C5.3 335.6 18.6 335.6 18.6 341.4C18.6 344 15.6 345.4 12.5 345.5" stroke-width="1.2"/><use href="#hd" x="5.3" y="341.4"/><use href="#hd" x="12.5" y="345.5"/>
    <!-- insert block -->
    <path d="M9.5 362V356.5H16.5L19.5 359.5V368" fill="url(#gp)" stroke="#5a5f6a"/><rect x="5.5" y="362.5" width="9.5" height="6.4" fill="url(#gv)"/><circle cx="12.8" cy="369" r="3" fill="#eceef2" stroke="#6a6f7a"/><use href="#hd" x="5.3" y="368.6"/><path d="M16.400 371.600H20.400V367.600Z" fill="#111" stroke="none"/>
    <!-- make block -->
    <rect x="6" y="381.5" width="10.5" height="7" fill="url(#gv)"/><circle cx="16.5" cy="388.3" r="3.3" fill="#eceef2" stroke="#5a5f6a"/><path d="M16.5 388.3V386M16.5 388.3H14.4" stroke="#9a9fa8" stroke-width=".7"/><use href="#hd" x="6" y="388.5"/>
    <!-- point -->
    <rect x="10.1" y="406.2" width="2.6" height="2.6" fill="#fff" stroke="#222"/>
    <!-- hatch -->
    <g stroke="#3a3d45" stroke-width="1.1"><path d="M6.5 421.5V438.5M17.5 421.5V438.5M4 424.5H20M4 435.5H20"/></g>
    <path d="M7.500 432L10.500 435.200M7.500 428.600L13.600 435.200M7.500 425.400L16.600 435.200M10.400 425.200L17 432.600M13.600 425.200L17 429.200" stroke="#4a4f5a" stroke-width=".8"/><path d="M11.5 438.5L19.5 430" stroke="#5a5f6a" stroke-width=".9"/>
    <!-- gradient -->
    <g stroke="#3a3d45" stroke-width="1.1"><path d="M6.5 442.5V459.5M17.5 442.5V459.5M4 445.5H20M4 456.5H20"/></g>
    <rect x="7.2" y="446.2" width="9.8" height="9.8" fill="url(#ggrad)" stroke="none"/><path d="M11 459.4L20 449.6" stroke="#5a5f6a" stroke-width=".9"/>
    <!-- region -->
    <path d="M5 467.5H14.5L19.5 472.5V479.5H5Z" fill="url(#gv)" stroke="#4a4e58" stroke-linejoin="round"/><circle cx="11.4" cy="473.6" r="3.1" fill="#fff" stroke="#3a3d45" stroke-width="1.1"/>
    <!-- table -->
    <rect x="4.7" y="488.6" width="14.8" height="14.6" rx="1" fill="#f8f8fa" stroke="#4a4e58" stroke-width="1.1"/><path d="M4.7 491H19.5" stroke="#5a5f6a" stroke-width="2"/><path d="M4.7 495.2H19.5M4.7 499.2H19.5M9.6 492V503M14.6 492V503" stroke="#b4b8c2" stroke-width=".9"/>
    <!-- add selected -->
    <circle cx="7.3" cy="535.4" r="3.3" fill="#6ab840" stroke="#3c7a1c"/><circle cx="16.4" cy="544.4" r="3.3" fill="#a8d4f4" stroke="#1c74d0" stroke-width="1.1"/><path d="M11.4 535.4H14.8V539" stroke="#111" stroke-width="1.2"/><path d="M14.8 541L12.8 538.4H16.8Z" fill="#111" stroke="none"/>
  </g>
  <defs><linearGradient id="ggrad" x1="0" y1="0" x2="1" y2="1"><stop offset="0" stop-color="#50545e"/><stop offset="1" stop-color="#f4f4f6"/></linearGradient></defs>
</svg>
<span style="left:4px;top:508px;width:16px;font:19px/20px 'Liberation Sans',sans-serif;color:#38383c;text-align:center;transform:scaleX(1.1);-webkit-text-stroke:.45px #38383c">A</span>
<!-- ===== right : Modify toolbar + Draw order toolbar ===== -->
<div style="left:1412px;top:102px;width:25px;height:404px;background:#343434"></div>
<div style="left:1413px;top:103px;width:23px;height:8px;background:#5a5a5a"></div>
<div style="left:1413px;top:111px;width:23px;height:394px;background:#ebebeb"></div>
<div style="left:1412px;top:507px;width:25px;height:147px;background:#343434"></div>
<div style="left:1413px;top:508px;width:23px;height:9px;background:#5a5a5a"></div>
<div style="left:1413px;top:517px;width:23px;height:136px;background:#ebebeb"></div>
<svg class="ov" viewBox="0 0 1440 868">
  <use href="#hgrip" x="1417" y="105" fill="#111"/><use href="#hgrip" x="1417" y="511" fill="#111"/>
  <g fill="none" stroke="#33363e" stroke-width="1">
    <!-- erase -->
    <path d="M1416 129.5H1419.4M1421.6 129.5H1432" stroke="#222"/>
    <path d="M1421.2 122.4L1430.4 113.6L1432.6 116L1423.6 125Z" fill="#e2c48a" stroke="#6a4a1c" stroke-width=".7"/><path d="M1421.2 122.4L1423.6 125L1422 126.4L1419.6 124Z" fill="#f4f4f4" stroke="#555" stroke-width=".6"/><path d="M1419.6 124L1422 126.4C1421 128 1419 128.400 1418.2 127.6C1417.4 126.8 1418 125 1419.6 124Z" fill="#e84a10" stroke="#9a2a04" stroke-width=".6"/>
    <!-- copy -->
    <circle cx="1419.4" cy="139.8" r="3.1" fill="#f2f3f5" stroke="#5a5f6a" stroke-width="1.1"/><path d="M1424.6 137.5H1430V141" stroke="#111" stroke-width="1.3"/><path d="M1430 143L1427.8 140.200H1432.2Z" fill="#111" stroke="none"/><circle cx="1429" cy="148.6" r="3.4" fill="#bfe0f4" stroke="#1c74d0" stroke-width="1.2"/><circle cx="1425.4" cy="146.4" r="3.5" fill="#bfe0f4" stroke="#1c74d0" stroke-width="1.2"/>
    <!-- mirror -->
    <path d="M1423.5 158V174" stroke="#222" stroke-width="1.1"/><path d="M1421.4 161.400V171.500H1416.600Z" fill="#f0f1f4" stroke="#3a3f4b"/><path d="M1425.6 161.400V171.500H1430.400Z" fill="#bfe0f4" stroke="#1c74d0" stroke-width="1.1"/>
    <!-- offset -->
    <path d="M1431 194.400H1419.400C1415.400 194.400 1415.400 187.300 1419.400 187.300H1420.400V185C1420.400 180.400 1427.600 180.400 1427.600 185V187.300H1431" stroke="#111" stroke-width="1.400"/><path d="M1431 192.500H1420.600C1419 192.500 1419 189.500 1420.600 189.500H1422.400V185.800C1422.400 183.800 1425.500 183.800 1425.500 185.800V189.500H1431" stroke="#1270d8" stroke-width="1.200"/>
    <!-- array -->
    <rect x="1416.600" y="203.100" width="5.400" height="5.400" fill="#f4f5f7" stroke="#4a4e58" stroke-width="1.1"/><rect x="1425.500" y="203.100" width="5.600" height="5.400" fill="#bfe0f4" stroke="#1c74d0" stroke-width="1.1"/><rect x="1416.600" y="211.800" width="5.600" height="5.400" fill="#bfe0f4" stroke="#1c74d0" stroke-width="1.1"/><path d="M1425.500 217.200V211.800H1431.100" fill="#bfe0f4" stroke="#1c74d0" stroke-width="1.100"/><path d="M1427.600 218H1432V213.600Z" fill="#111" stroke="none"/>
    <!-- move -->
    <g stroke="#333" stroke-width="1.200" stroke-dasharray="1.400 1"><path d="M1423.800 226V238M1417.800 231.800H1430"/></g><g fill="#2a2a2a" stroke="none"><path d="M1423.800 223.600L1426.600 227.200H1421Z M1423.800 240L1426.600 236.400H1421Z M1415.600 231.800L1419.200 229V234.600Z M1432 231.800L1428.400 229V234.600Z"/></g><rect x="1422.300" y="230.300" width="3" height="3" fill="#fff" stroke="#222"/>
    <!-- rotate -->
    <path d="M1426.400 248.600A6.400 6.400 0 1 1 1420 249.200" stroke="#686c74" stroke-width="1.500"/><path d="M1422.600 245.400L1427.600 248L1422.600 250.600Z" fill="#55585f" stroke="none"/>
    <!-- scale -->
    <path d="M1416.600 274V268.600H1431.400V283.400H1426" fill="url(#gb)" stroke="#1c74d0" stroke-width="1.200"/><rect x="1416.600" y="275.600" width="7.800" height="7.800" fill="url(#gv)" stroke="#4a4e58" stroke-width="1.100"/>
    <!-- stretch -->
    <path d="M1424 290.600H1427.400L1431.600 305.400H1424Z" fill="#bfe0f4" stroke="#1c74d0" stroke-width="1.100"/><path d="M1423.600 290.600H1416.600V305.400H1423.600" fill="url(#gv)" stroke="#3a3f4b" stroke-width="1.100"/><path d="M1419.400 301.500H1425" stroke="#111" stroke-width="1.300"/><path d="M1427.200 301.500L1424.200 299.200V303.800Z" fill="#111" stroke="none"/>
    <!-- trim -->
    <path d="M1416 319.500H1420.600" stroke="#222" stroke-width="1.200"/><path d="M1419.400 325.600L1424.600 313.400" stroke="#1c74d0" stroke-width="1.300"/><path d="M1424.600 319.500H1432" stroke="#1c74d0" stroke-width="1.200" stroke-dasharray="2 1"/>
    <!-- extend -->
    <path d="M1416 341.500H1420.800" stroke="#222" stroke-width="1.200"/><path d="M1422 341.500H1427" stroke="#1c74d0" stroke-width="1.200" stroke-dasharray="2 1"/><path d="M1426.400 347.600L1431.600 336.400" stroke="#1c74d0" stroke-width="1.300"/>
    <!-- break at point -->
    <path d="M1432 369.400H1416.600V359.600H1432" fill="url(#gv)" stroke="#3a3f4b" stroke-width="1.100"/><rect x="1427" y="358" width="3.200" height="3.200" fill="#1c74d0" stroke="none"/>
    <!-- break -->
    <path d="M1420 381.800H1416.600V391.400H1431.400V381.800H1428.400" fill="url(#gv)" stroke="#3a3f4b" stroke-width="1.100"/><rect x="1419" y="379.600" width="3.200" height="3.200" fill="#1c74d0" stroke="none"/><rect x="1426" y="379.600" width="3.200" height="3.200" fill="#1c74d0" stroke="none"/>
    <!-- join -->
    <path d="M1417 407.500H1431.200" stroke="#222" stroke-width="1.100"/><path d="M1420.800 404.800L1424 407.500L1420.800 410.200ZM1427.200 404.800L1424 407.500L1427.200 410.200Z" fill="#1c74d0" stroke="none"/>
    <!-- chamfer -->
    <path d="M1424.400 422.600H1431.400V437.400H1416.600V430.400" fill="url(#gv)" stroke="#3a3f4b" stroke-width="1.100"/><path d="M1416.600 430.400L1424.400 422.600Z" fill="url(#gv)" stroke="none"/><path d="M1416 431L1425 422" stroke="#1c74d0" stroke-width="1.500"/>
    <!-- fillet -->
    <path d="M1426.400 444.600H1431.400V459.400H1416.600V453.600" fill="url(#gv)" stroke="#3a3f4b" stroke-width="1.100"/><path d="M1416.600 453.600C1416.600 448.400 1421 444.600 1426.400 444.600" fill="url(#gv)" stroke="#1c74d0" stroke-width="1.500"/>
    <!-- blend curves -->
    <path d="M1417.600 474.600C1419 471 1421.400 470.400 1423.400 473C1425.400 476 1428.400 476.400 1430.400 472" stroke="#1c74d0" stroke-width="1.400"/><path d="M1416.400 480.400L1417.600 474.600M1430.400 472L1431.600 466.400" stroke="#33363e" stroke-width="1.200"/><rect x="1416.400" y="473.400" width="2.400" height="2.400" fill="#fff" stroke="#222" stroke-width=".8"/><rect x="1429.200" y="470.800" width="2.400" height="2.400" fill="#fff" stroke="#222" stroke-width=".8"/>
    <!-- explode -->
    <g stroke="#1c74d0" stroke-width="1.100" fill="#d2e9f7"><path d="M1419.400 493.600L1423 490.400H1429.600L1426.200 493.600Z"/><rect x="1419.600" y="495.400" width="6.400" height="6.400" fill="#bfe0f4"/><path d="M1416.200 496L1418 494.400V500.600L1416.200 502.200Z"/><path d="M1428.200 495.400L1431.600 492.400V498.600L1428.200 501.600Z"/></g>
    <!-- bring to front -->
    <g stroke="#3a3f4b" stroke-width="1.100"><rect x="1416.600" y="520.600" width="10.400" height="6.400" fill="url(#gv)"/><rect x="1422.600" y="529.600" width="9.400" height="6.400" fill="url(#gv)"/><rect x="1419.800" y="524.400" width="9.400" height="7" fill="url(#gg)"/></g>
    <!-- send to back -->
    <g stroke="#3a3f4b" stroke-width="1.100"><rect x="1419.800" y="546.400" width="9.400" height="7" fill="url(#gg)"/><rect x="1416.600" y="542.600" width="10.400" height="6" fill="url(#gv)"/><rect x="1422.400" y="551.400" width="9.400" height="5.800" fill="url(#gv)"/></g>
    <!-- bring above -->
    <g stroke="#3a3f4b" stroke-width="1.100"><rect x="1416.600" y="565.600" width="11" height="8.400" fill="url(#gv)"/><rect x="1420.600" y="570.600" width="11" height="8" fill="url(#gg)"/></g>
    <!-- send under -->
    <g stroke="#3a3f4b" stroke-width="1.100"><rect x="1420.600" y="592.600" width="11" height="8" fill="url(#gg)"/><rect x="1416.600" y="587.600" width="11" height="8" fill="url(#gv)"/></g>
    <path d="M1415 607.500H1434" stroke="#a9a9a9"/>
    <!-- text to front -->
    <path d="M1428.600 616.500H1431.500V626.500H1420.500V622" stroke="#222" stroke-width="1.100"/><path d="M1428.400 630.400H1432.400V626.400Z" fill="#111" stroke="none"/>
    <!-- hatch to back -->
    <rect x="1416.600" y="636.600" width="11" height="8" fill="url(#gg)" stroke="#3a3f4b" stroke-width="1.100"/><path d="M1422.500 648.500H1432M1430.500 640V650" stroke="#333" stroke-width=".9"/><path d="M1424 648L1429 643M1426.600 648.400L1430 645M1422.400 646.600L1425.400 643.600" stroke="#666" stroke-width=".8"/><path d="M1430.500 639L1431.800 641.400H1429.200ZM1421.600 648.500L1424 647.200V649.800Z" fill="#333" stroke="none"/>
  </g>
</svg>
<span style="left:1417px;top:612px;font:bold 7.5px/8px 'Liberation Mono',monospace;letter-spacing:-.6px;color:#111">ABC</span>
<!-- ===== layout tabs + scrollbars ===== -->
<style>
.sb{border:1px solid #aeb2c6;border-radius:2.5px;background:linear-gradient(#fbfbfd,#e6e7f0 45%,#cfd1e0 85%,#dcdde8);box-shadow:inset 0 0 0 1px rgba(255,255,255,.7)}
.sbh{background:linear-gradient(90deg,#fbfbfd,#e6e7f0 45%,#cfd1e0 85%,#dcdde8)}
.nv{top:770px;width:13px;height:13px;background:#dddde2;border:1px solid #f6f6f8;border-right-color:#c4c4cc;border-bottom-color:#c4c4cc}
</style>
<div style="left:31px;top:769px;width:896px;height:15px;background:#e1e1e7"></div>
<div style="left:128px;top:783px;width:92px;height:1px;background:#8c8c8c"></div>
<div class="nv" style="left:31px"></div><div class="nv" style="left:45px"></div><div class="nv" style="left:59px"></div><div class="nv" style="left:73px"></div>
<div style="left:928px;top:770px;width:4px;height:13px;background:#f1f1ec;border:1px solid #fafaf6;border-right-color:#d0d0c8"></div>
<div class="sb" style="left:933px;top:770px;width:17px;height:14px"></div>
<div class="sb" style="left:950.5px;top:770px;width:16.5px;height:14px"></div>
<div class="sb" style="left:1372.5px;top:770px;width:16.5px;height:14px"></div>
<div class="sb sbh" style="left:1390px;top:104px;width:16px;height:16px"></div>
<div class="sb sbh" style="left:1390px;top:121.5px;width:16px;height:16.5px"></div>
<div class="sb sbh" style="left:1390px;top:752px;width:16px;height:17px"></div>
<svg class="ov" viewBox="0 0 1440 868">
  <!-- tab nav arrows -->
  <g fill="#aca899"><path d="M34 772H35.600V781H34ZM41.400 772V781L36.400 776.500Z"/><path d="M53.600 772V781L48.400 776.500Z"/><path d="M62.600 772V781L67.800 776.500Z"/><path d="M76 772V781L81 776.500ZM81.800 772H83.400V781H81.800Z"/></g>
  <!-- active tab -->
  <path d="M87.600 769H133.200L127.800 782.600H93Z" fill="#000"/>
  <g stroke="#808080" stroke-width="1" fill="none"><path d="M173.600 783L178.400 770.400M219 783L225 770.400"/><path d="M133 770L135.600 777" stroke="#a9a9a9"/><path d="M178.600 772L180.600 777" stroke="#a9a9a9"/></g>
  <!-- scroll arrows -->
  <g fill="none" stroke="#2c2c30" stroke-width="2.200"><path d="M943.600 772.800L939.400 777L943.600 781.200"/><path d="M1378.800 772.800L1383 777L1378.800 781.200"/><path d="M1393.800 114.200L1398 110L1402.200 114.200"/><path d="M1393.800 758.400L1398 762.600L1402.200 758.400"/></g>
  <g stroke="#8a90ac" stroke-width="1"><path d="M955.500 774V780M957.500 774V780M959.500 774V780M961.500 774V780"/><path d="M1395 126.500H1401M1395 128.500H1401M1395 130.500H1401M1395 132.500H1401"/></g>
</svg>
<span class="c wht" style="left:98px;top:770px">模型</span>
<span class="c" style="left:138px;top:770px">布局</span><span class="dg" style="left:162px;top:771px"><i>1</i></span>
<span class="c" style="left:184px;top:770px">布局</span><span class="dg" style="left:208px;top:771px"><i>2</i></span>
<!-- ===== command window text ===== -->
<style>.c14{font:14px/14px "Liberation Sans",sans-serif;white-space:pre}.m14{font:14px/14px "Liberation Mono",monospace;white-space:pre;transform:scaleX(.8332);transform-origin:0 50%}</style>
<span class="c14" style="left:17px;top:791px;color:#111">选择对象</span>
<span class="m14" style="left:73px;top:792px;color:#111">:  </span>
<span class="c14" style="left:94px;top:791px;color:#111">指定镜像线的第一点</span>
<span class="m14" style="left:220px;top:792px;color:#111">: </span>
<span class="c14" style="left:234px;top:791px;color:#111">指定镜像线的第二点</span>
<span class="m14" style="left:360px;top:792px;color:#111">:</span>
<span class="c14" style="left:17px;top:806px;color:#111">要删除源对象吗</span>
<span class="m14" style="left:115px;top:807px;color:#111">? [</span>
<span class="c14" style="left:136px;top:806px;color:#111">是</span>
<span class="m14" style="left:150px;top:807px;color:#111">(Y)/</span>
<span class="c14" style="left:178px;top:806px;color:#111">否</span>
<span class="m14" style="left:192px;top:807px;color:#111">(N)] &lt;N&gt;:</span>
<span class="c14" style="left:17px;top:833px;color:#111">命令</span>
<span class="m14" style="left:45px;top:834px;color:#111">:</span>
<svg class="ov" viewBox="0 0 1440 868"><path d="M2 793h1v1h-1zM4 793h1v1h-1zM6 793h1v1h-1zM8 793h1v1h-1zM10 793h1v1h-1zM12 793h1v1h-1zM2 795h1v1h-1zM4 795h1v1h-1zM6 795h1v1h-1zM8 795h1v1h-1zM10 795h1v1h-1zM12 795h1v1h-1z" fill="#222"/></svg>
<!-- ===== status bar ===== -->
<style>
.so,.sn{top:849px;height:19px;width:22px;border-left:1px solid #5c5c5c;box-shadow:inset 1px 0 0 rgba(255,255,255,.45)}
.so{background:linear-gradient(#c8c8c8,#b8b8b8 45%,#adadad 60%,#a6a6a6)}
.sn{background:linear-gradient(#e3f1f6,#c3e0ea 45%,#93c3d3 58%,#b3d7e3)}
.sd{top:849px;height:19px;background:none}
</style>
<div class="so" style="left:217px"></div><div class="so" style="left:239px"></div><div class="so" style="left:261px"></div><div class="so" style="left:283px"></div><div class="so" style="left:305px"></div>
<div class="sn" style="left:327px"></div><div class="so" style="left:349px"></div><div class="sn" style="left:371px"></div><div class="sn" style="left:393px"></div><div class="sn" style="left:415px"></div>
<div class="so" style="left:437px"></div><div class="sn" style="left:459px"></div><div class="so" style="left:481px"></div><div class="so" style="left:503px"></div>
<div class="sd" style="left:525px;width:586px;border-left:1px solid #444"></div>
<div class="so" style="left:1111px;width:30.500px"></div><div class="so" style="left:1141px"></div><div class="so" style="left:1163px"></div>
<div class="sd" style="left:1185px;width:18px;border-left:1px solid #444"></div>
<div class="so" style="left:1203px;width:54px"></div><div class="so" style="left:1257px;width:22.500px"></div><div class="so" style="left:1279px"></div>
<div class="sd" style="left:1301px;width:6px;border-left:1px solid #444"></div>
<div class="so" style="left:1307px"></div><div class="so" style="left:1329px"></div><div class="so" style="left:1351px;width:21.500px"></div>
<div class="so" style="left:1373px;width:32px;background:linear-gradient(#4e4e4e,#6e6e6e 25%,#848484)"></div>
<div style="left:1376px;top:851px;width:23px;height:17px;background:linear-gradient(90deg,#8a8a8a,#a9a9a9 50%,#969696);border-top:1px solid #666"></div>
<div class="so" style="left:1405px;width:11px"></div><div class="so" style="left:1416px"></div>
<div class="sd" style="left:1438px;width:2px;border-left:1px solid #444"></div>
<span class="dg" style="left:12px;top:855px;color:#0a0a0a"><i>1602</i><b>.</b><i>7972</i><b>,</b><b> </b><i>1631</i><b>.</b><i>0092</i><b>,</b><b> </b><i>0</i><b>.</b><i>0000</i></span>
<span class="c" style="left:1114px;top:853px;color:#0a0a0a">模型</span>
<span class="dg" style="left:1224px;top:854px;font-size:13px;line-height:13px;color:#0a0a0a;letter-spacing:0"><i>1</i><b style="width:3.600px">:</b><i>1</i></span>
<svg class="ov" viewBox="0 0 1440 868">
  <g fill="none" stroke="#2a2a2e" stroke-width="1">
    <!-- infer constraints -->
    <path d="M225.500 851.500V865M219.500 857.500H231.500" stroke-width="1.300"/><rect x="223.500" y="855.500" width="4" height="4" stroke-width=".9"/><rect x="228.800" y="862.800" width="2.800" height="2.800" fill="#fff" stroke="#c04010" stroke-width=".8"/><path d="M231.500 865.500V859.500H234.500V862.500H231.500" stroke="#1a60c8" stroke-width="1.100"/>
    <!-- snap -->
    <g stroke="#333" stroke-dasharray="1 1.500"><path d="M245 855.500H255M245 858.500H252M245 861.500H252"/></g><path d="M245 865H253" stroke-width="1.400"/><path d="M255 857V865" stroke-width="1.400"/>
    <!-- grid -->
    <rect x="264.500" y="851.500" width="15.500" height="15.500" fill="#fafafa" stroke="#3a3a3e"/><path d="M267.600 852V867M270.700 852V867M273.800 852V867M276.900 852V867M265 854.600H280M265 857.700H280M265 860.800H280M265 863.900H280" stroke="#3a3a3e" stroke-width="1.150"/>
    <!-- ortho -->
    <path d="M287.500 852V866.500H302" stroke="#4a4a4e" stroke-width="1.300"/><path d="M287.500 861.500H292.500V866.500" stroke="#6a6a6e"/>
    <!-- polar -->
    <path d="M316 856.600A4.600 4.600 0 1 0 319.400 864.800" stroke="#4a4a4e" stroke-width="1.200"/><path d="M314.600 862.500H321.500M314.600 862.500L320.600 855.400M318 858.600L321 862.500" stroke="#222" stroke-width="1.100"/>
    <!-- osnap -->
    <rect x="331.500" y="853.500" width="12" height="12.500" rx="1" fill="url(#gv)" stroke="#4a4e58" stroke-width="1.100"/><circle cx="331.600" cy="853.400" r="1.700" fill="#fff" stroke="#e04a10" stroke-width="1.100"/>
    <!-- 3d osnap -->
    <path d="M354 856.500L357.500 853H367V861L363.500 864.500H354Z" fill="#e6e8ec" stroke="#4a4e58" stroke-linejoin="round"/><path d="M354 856.500H363.500V864.500M363.500 856.500L367 853" stroke="#6a6e78" stroke-width=".8"/><circle cx="354.600" cy="864.400" r="1.900" fill="#fff" stroke="#e04a10" stroke-width="1.200"/>
    <!-- otrack -->
    <path d="M377 865.500H390" stroke="#222" stroke-width="1.300"/><path d="M378 865L388.500 855.500" stroke="#222" stroke-width="1.100"/><path d="M383 861L384.600 862.400" stroke="#222" stroke-width=".8"/>
    <!-- ducs -->
    <path d="M397.500 853V865.500H411" stroke="#333" stroke-width="1.200"/><path d="M397.500 851.200L399.300 854H395.700ZM412.600 865.500L410 863.700V867.300Z" fill="#333" stroke="none"/><path d="M398.500 864.500L405.500 857.500" stroke="#444" stroke-dasharray="1.600 1"/><path d="M408.400 851.400L405 855.600H407.600L406 859.600L411.600 854.400H408.800L410.800 851.400Z" fill="#f8a818" stroke="#e07008" stroke-width=".6"/>
    <!-- dyn -->
    <path d="M420 858.500H430M424.500 854V863" stroke="#111" stroke-width="1.500"/><rect x="426.500" y="860.500" width="6" height="3" fill="#fff" stroke="#111" stroke-width="1.100"/>
    <!-- lwt -->
    <path d="M442 858.500H448.500" stroke="#111" stroke-width="2.400"/><path d="M448.500 858.500H454.500" stroke="#111" stroke-width="1"/><path d="M448.500 853V865" stroke="#111" stroke-width="1.600"/>
    <!-- transparency -->
    <rect x="463" y="852" width="14.500" height="14.500" rx="1" fill="#a9d0f4" stroke="#2a70d0" stroke-width="1.500"/><path d="M464.500 853.500h2.500v2.500h-2.500zM469.500 853.500h2.500v2.500h-2.500zM474 853.500h2.500v2.500h-2.500zM467 856h2.500v2.500h-2.500zM472 856h2.500v2.500h-2.500zM464.500 858.500h2.500v2.500h-2.500zM469.500 858.500h2.500v2.500h-2.500zM474 858.500h2.500v2.500h-2.500zM467 861h2.500v2.500h-2.500zM472 861h2.500v2.500h-2.500zM464.500 863h2.500v2.500h-2.500zM469.500 863h2.500v2.500h-2.500zM474 863h2.500v2.500h-2.500z" fill="#6ea8e8" stroke="none"/>
    <!-- quick properties -->
    <rect x="489" y="855" width="6.500" height="8.500" fill="#fff" stroke="#111" stroke-width="1.600"/><path d="M489 858H495.500M489 860.800H495.500M491.500 857V863.500" stroke="#111" stroke-width=".9"/>
    <!-- selection cycling -->
    <path d="M510.500 851.500V858.500M507 855H514" stroke="#4a5670" stroke-width="1.200"/><rect x="511.500" y="856.500" width="7" height="6.500" rx="1" fill="#f6f7f9" stroke="#4a5670" stroke-width="1.100"/><rect x="514.500" y="859.500" width="7" height="6.500" fill="#8cc060" stroke="#2a7a10" stroke-width="1.200"/>
    <!-- quick view layouts -->
    <rect x="1146.500" y="852.500" width="11.500" height="10.500" rx="1" fill="#f4f4f6" stroke="#3a3a3e" stroke-width="1.200"/><path d="M1149.500 855V861H1154.500Z" stroke="#3a3a3e" fill="#d8d8dc" stroke-width=".9"/><path d="M1144 866H1160" stroke="#444" stroke-width="1.200"/>
    <!-- quick view drawings -->
    <rect x="1166.500" y="852.500" width="7" height="7.500" rx="1" fill="url(#gv)" stroke="#3a3a3e" stroke-width="1.100"/><rect x="1174.500" y="852.500" width="7" height="7.500" rx="1" fill="url(#gv)" stroke="#3a3a3e" stroke-width="1.100"/><path d="M1167 864.800H1181" stroke="#555" stroke-width="2.400" stroke-linecap="round"/>
    <!-- annotation scale -->
    <path id="anno" d="M1214 852C1214.600 855.500 1215.600 858 1217 860C1218.400 862 1219.800 863.800 1221 866C1218.800 865.600 1216 864.800 1214 863C1212 864.800 1209.200 865.600 1207 866C1208.200 863.800 1209.600 862 1211 860C1212.400 858 1213.400 855.500 1214 852Z" fill="#fdfdfd" stroke="#3e3e42" stroke-width=".9" stroke-linejoin="round"/>
    <path d="M1245.200 856H1252.200L1248.700 860.200Z" fill="#111" stroke="none"/>
    <use href="#anno" x="53" y="0"/><path d="M1271.500 862V866.500H1274.500V862" fill="#f4f4f4" stroke="#666" stroke-width=".8"/><circle cx="1273" cy="859.600" r="3.100" fill="#fcc838" stroke="#e08a10" stroke-width=".9"/>
    <g opacity=".38"><use href="#anno" x="76" y="0"/><path d="M1284 853L1288.600 858.400L1285.400 858L1289 862.600" stroke="#555" stroke-width="1.200"/></g>
    <!-- workspace switching -->
    <g transform="translate(1310 851)"><path d="M6.600 .2H9.400L9.800 2L11.400 2.700L13 1.700L15 3.700L14 5.300L14.600 6.800L16 7.200V9.600L14.500 10L13.900 11.600L14.900 13.200L12.900 15.100L11.400 14.100L9.800 14.700L9.400 16H6.600L6.200 14.700L4.600 14.100L3 15.100L1.100 13.200L2 11.600L1.500 10L0 9.600V7.200L1.500 6.800L2 5.300L1.100 3.700L3 1.700L4.600 2.700L6.200 2Z" fill="#fbfbfb" stroke="#3a3a3e" stroke-width="1.100"/><circle cx="8" cy="8.100" r="2.900" fill="#b4b4b4" stroke="#3a3a3e" stroke-width="1.300"/><path d="M11.600 16H16V11.600Z" fill="#111" stroke="none"/></g>
    <!-- toolbar lock -->
    <path d="M1340.600 858.400V855.600C1340.600 851.600 1347.400 851.600 1347.400 855.600V857.600" stroke="#2e2e32" stroke-width="3.600"/><path d="M1340.600 858.800V855.600C1340.600 851.600 1347.400 851.600 1347.400 855.600V857.200" stroke="#fafafa" stroke-width="1.800"/><rect x="1332.600" y="858.400" width="11.400" height="8" rx="1" fill="#fafafa" stroke="#2e2e32" stroke-width="1.200"/><path d="M1338.300 860.400V864.600" stroke="#2e2e32" stroke-width="1.600"/>
    <!-- hardware acceleration -->
    <rect x="1354.600" y="853.600" width="12" height="7" rx="1" fill="url(#gg)" stroke="#3a4050" stroke-width="1.100"/><path d="M1356.500 851.500V853.500M1359.500 851.500V853.500M1362.500 851.500V853.500M1365.500 851.500V853.500M1356.500 860.600V862.600M1359.500 860.600V862.600M1362.500 860.600V862.600" stroke="#3a4050"/><path d="M1365.500 862.500V867H1368.500V862.500" fill="#f4f4f4" stroke="#666" stroke-width=".8"/><circle cx="1367" cy="860.200" r="3.300" fill="#fcc838" stroke="#e08a10" stroke-width=".9"/>
    <!-- isolate objects -->
    <path d="M1385.600 863.600V868H1389.400V863.600" fill="#f2f2f2" stroke="#555" stroke-width=".9"/><path d="M1387.500 850.800C1391 850.800 1392.800 853.400 1392.800 856.200C1392.800 859.400 1390.400 860.600 1389.800 863.600H1385.200C1384.600 860.600 1382.200 859.400 1382.200 856.200C1382.200 853.400 1384 850.800 1387.500 850.800Z" fill="#fbe9a6" stroke="#6a5a2a" stroke-width="1"/>
    <path d="M1408.800 859H1414.200L1411.500 862.200Z" fill="#111" stroke="none"/>
    <!-- clean screen -->
    <rect x="1420.600" y="852.600" width="13" height="13" rx="1" fill="url(#gv)" stroke="#2e2e32" stroke-width="1.300"/><path d="M1420.600 854.600H1433.600" stroke="#2e2e32" stroke-width="2.400"/><path d="M1427.500 854h1M1429.500 854h1M1431.500 854h1" stroke="#ddd" stroke-width="1"/>
  </g>
</svg>
</body></html>
